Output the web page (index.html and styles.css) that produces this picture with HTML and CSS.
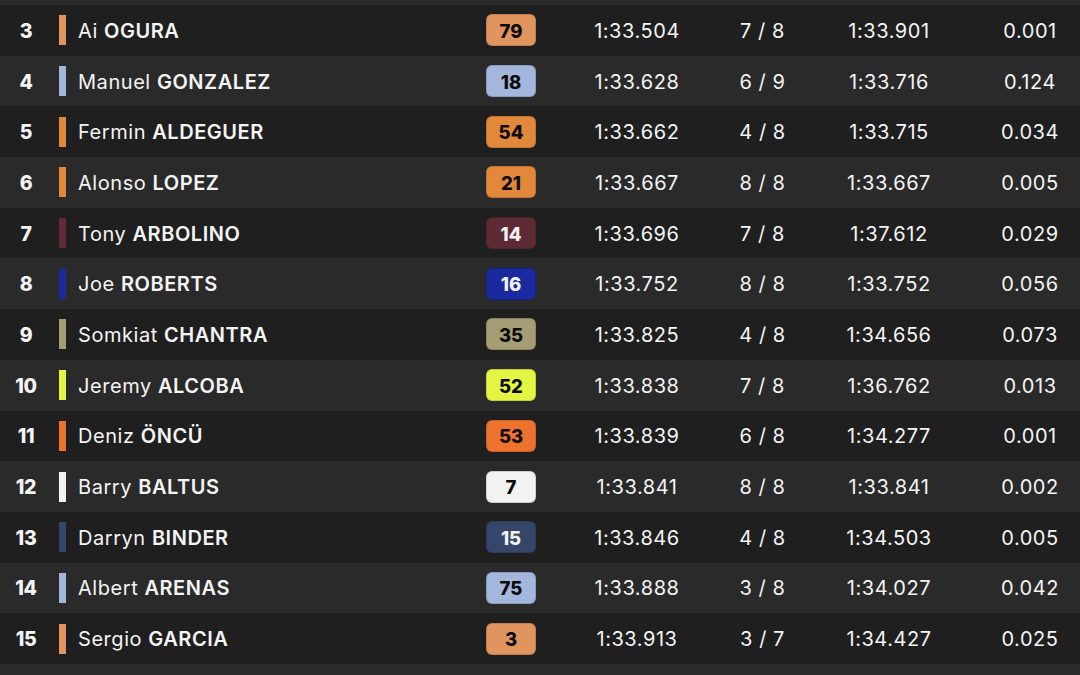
FILE: index.html
```html
<!DOCTYPE html>
<html lang="en">
<head>
<meta charset="utf-8">
<title>Classification</title>
<link rel="stylesheet" href="styles.css">
</head>
<body>
<div class="table">
  <div class="row">
    <div class="pos">3</div><div class="barcell"><span class="bar c-79"></span></div>
    <div class="name">Ai <b>OGURA</b></div><div class="badge c-79">79</div>
    <div class="cell">1:33.504</div><div class="cell">7 / 8</div><div class="cell">1:33.901</div><div class="cell">0.001</div>
  </div>
  <div class="row">
    <div class="pos">4</div><div class="barcell"><span class="bar c-18"></span></div>
    <div class="name">Manuel <b>GONZALEZ</b></div><div class="badge c-18">18</div>
    <div class="cell">1:33.628</div><div class="cell">6 / 9</div><div class="cell">1:33.716</div><div class="cell">0.124</div>
  </div>
  <div class="row">
    <div class="pos">5</div><div class="barcell"><span class="bar c-54"></span></div>
    <div class="name">Fermin <b>ALDEGUER</b></div><div class="badge c-54">54</div>
    <div class="cell">1:33.662</div><div class="cell">4 / 8</div><div class="cell">1:33.715</div><div class="cell">0.034</div>
  </div>
  <div class="row">
    <div class="pos">6</div><div class="barcell"><span class="bar c-54"></span></div>
    <div class="name">Alonso <b>LOPEZ</b></div><div class="badge c-54">21</div>
    <div class="cell">1:33.667</div><div class="cell">8 / 8</div><div class="cell">1:33.667</div><div class="cell">0.005</div>
  </div>
  <div class="row">
    <div class="pos">7</div><div class="barcell"><span class="bar c-14"></span></div>
    <div class="name">Tony <b>ARBOLINO</b></div><div class="badge c-14">14</div>
    <div class="cell">1:33.696</div><div class="cell">7 / 8</div><div class="cell">1:37.612</div><div class="cell">0.029</div>
  </div>
  <div class="row">
    <div class="pos">8</div><div class="barcell"><span class="bar c-16"></span></div>
    <div class="name">Joe <b>ROBERTS</b></div><div class="badge c-16">16</div>
    <div class="cell">1:33.752</div><div class="cell">8 / 8</div><div class="cell">1:33.752</div><div class="cell">0.056</div>
  </div>
  <div class="row">
    <div class="pos">9</div><div class="barcell"><span class="bar c-35"></span></div>
    <div class="name">Somkiat <b>CHANTRA</b></div><div class="badge c-35">35</div>
    <div class="cell">1:33.825</div><div class="cell">4 / 8</div><div class="cell">1:34.656</div><div class="cell">0.073</div>
  </div>
  <div class="row">
    <div class="pos">10</div><div class="barcell"><span class="bar c-52"></span></div>
    <div class="name">Jeremy <b>ALCOBA</b></div><div class="badge c-52">52</div>
    <div class="cell">1:33.838</div><div class="cell">7 / 8</div><div class="cell">1:36.762</div><div class="cell">0.013</div>
  </div>
  <div class="row">
    <div class="pos">11</div><div class="barcell"><span class="bar c-53"></span></div>
    <div class="name">Deniz <b>ÖNCÜ</b></div><div class="badge c-53">53</div>
    <div class="cell">1:33.839</div><div class="cell">6 / 8</div><div class="cell">1:34.277</div><div class="cell">0.001</div>
  </div>
  <div class="row">
    <div class="pos">12</div><div class="barcell"><span class="bar c-7"></span></div>
    <div class="name">Barry <b>BALTUS</b></div><div class="badge c-7">7</div>
    <div class="cell">1:33.841</div><div class="cell">8 / 8</div><div class="cell">1:33.841</div><div class="cell">0.002</div>
  </div>
  <div class="row">
    <div class="pos">13</div><div class="barcell"><span class="bar c-15"></span></div>
    <div class="name">Darryn <b>BINDER</b></div><div class="badge c-15">15</div>
    <div class="cell">1:33.846</div><div class="cell">4 / 8</div><div class="cell">1:34.503</div><div class="cell">0.005</div>
  </div>
  <div class="row">
    <div class="pos">14</div><div class="barcell"><span class="bar c-18"></span></div>
    <div class="name">Albert <b>ARENAS</b></div><div class="badge c-18">75</div>
    <div class="cell">1:33.888</div><div class="cell">3 / 8</div><div class="cell">1:34.027</div><div class="cell">0.042</div>
  </div>
  <div class="row">
    <div class="pos">15</div><div class="barcell"><span class="bar c-79"></span></div>
    <div class="name">Sergio <b>GARCIA</b></div><div class="badge c-79">3</div>
    <div class="cell">1:33.913</div><div class="cell">3 / 7</div><div class="cell">1:34.427</div><div class="cell">0.025</div>
  </div>
</div>
</body>
</html>
```

FILE: styles.css
```css
html, body {
  margin: 0;
  padding: 0;
}
body {
  background: #2a2a2a;
  font-family: Inter, "Noto Sans", sans-serif;
  color: #f4f4f4;
  width: 1080px;
  height: 675px;
  overflow: hidden;
}
.table {
  margin-top: 5px;
  display: flex;
  flex-direction: column;
}
.row {
  height: 50.7px;
  display: grid;
  grid-template-columns: 51px 27px 408px 50px 202px 49px 204px 78px;
  align-items: center;
  padding-right: 11px;
  font-size: 20px;
  letter-spacing: 0.55px;
}
.row:nth-child(odd) {
  background: #1f1f1f;
}
.row:nth-child(even) {
  background: #2a2a2a;
}
.pos {
  text-align: center;
  font-weight: 800;
  font-size: 19.5px;
  letter-spacing: -0.3px;
  padding-left: 1px;
  padding-top: 1px;
}
.barcell {
  display: flex;
  align-items: center;
  padding-left: 8px;
}
.bar {
  display: block;
  width: 7px;
  height: 30px;
}
.name {
  font-weight: 400;
  white-space: nowrap;
  padding-top: 1px;
}
.name b {
  font-weight: 600;
}
.badge {
  height: 32px;
  border-radius: 6px;
  display: flex;
  align-items: center;
  justify-content: center;
  font-weight: 800;
  font-size: 18.5px;
  letter-spacing: 0;
  color: #0c0c0c;
  box-sizing: border-box;
  border: 1px solid rgba(0,0,0,0.15);
  padding-top: 1px;
}
.cell {
  text-align: center;
  white-space: nowrap;
  padding-top: 1px;
}
.c-79 { background: #e0955f; }
.c-18 { background: #a3b6dc; }
.c-54 { background: #e2883a; }
.c-14 { background: #5d2a35; color: #f2f2f2; }
.c-16 { background: #1a2a9e; color: #f2f2f2; }
.c-35 { background: #a59d74; }
.c-52 { background: #e3f542; }
.c-53 { background: #ec722e; }
.c-7  { background: #f2f2f2; }
.c-15 { background: #35466a; color: #f2f2f2; }
```
